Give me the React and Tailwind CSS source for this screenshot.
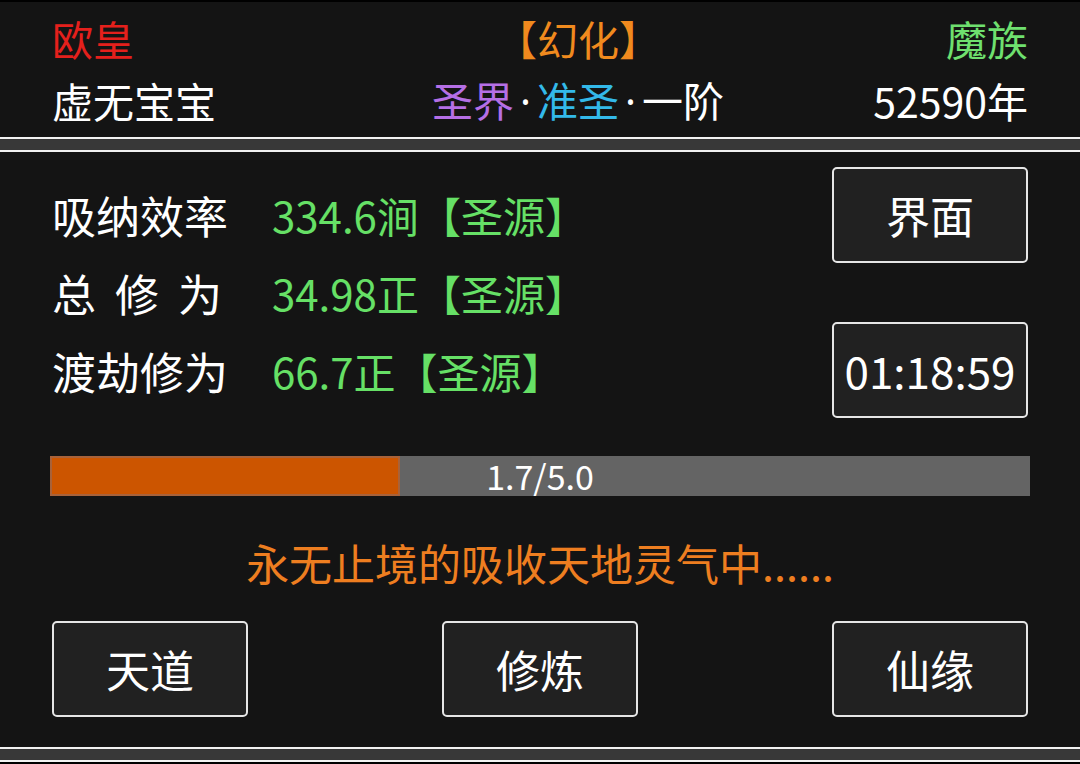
import React from 'react';

const stats = [
  { label: '吸纳效率', value: '334.6涧【圣源】', spread: false },
  { label: '总修为', value: '34.98正【圣源】', spread: true },
  { label: '渡劫修为', value: '66.7正【圣源】', spread: false },
];

function Divider() {
  return (
    <div className="flex flex-col">
      <div className="h-[2px] bg-[#f2f2f2]" />
      <div className="h-[11px] bg-[#383838]" />
      <div className="h-[2px] bg-[#f2f2f2]" />
    </div>
  );
}

function Btn({ children, className = '' }) {
  return (
    <div className={`w-[196px] h-[96px] flex items-center justify-center rounded-[5px] border-2 border-[#e6e6e6] bg-[#212121] text-white text-[44px] ${className}`}>
      {children}
    </div>
  );
}

function Dot() {
  return <span className="font-['Noto_Sans',sans-serif] text-white mx-[6px]">·</span>;
}

export default function App() {
  const current = 1.7;
  const total = 5.0;
  const pct = (current / total) * 105;

  return (
    <div className="w-[1080px] h-[764px] bg-black flex flex-col font-['Noto_Sans_CJK_SC','Noto_Sans',sans-serif] overflow-hidden">
      <div className="mt-[2px] bg-[#141414] h-[135px] px-[52px] pt-[8px]">
        <div className="grid grid-cols-[326px_400px_1fr] h-[56px] items-center text-[41px] leading-none">
          <span className="text-[#e5201c]">欧皇</span>
          <span className="text-center text-[#f08a1e]">【幻化】</span>
          <span className="text-right text-[#6fe06f]">魔族</span>
        </div>
        <div className="grid grid-cols-[326px_400px_1fr] h-[56px] mt-[6px] items-center text-[41px] leading-none text-white">
          <span>虚无宝宝</span>
          <span className="text-center">
            <span className="text-[#b56fe6]">圣界</span><Dot /><span className="text-[#33b9e9]">准圣</span><Dot />一阶
          </span>
          <span className="text-right">52590年</span>
        </div>
      </div>

      <Divider />

      <div className="bg-[#141414] h-[595px] px-[52px] pt-[15px] flex flex-col">
        <div className="flex justify-between">
          <div className="pt-[9px] flex flex-col">
            {stats.map(s => (
              <div key={s.label} className="h-[78px] flex items-center text-[44px] leading-none">
                {s.spread ? (
                  <span className="w-[176px] flex justify-between text-white pr-[6px]">
                    {s.label.split('').map(c => <span key={c}>{c}</span>)}
                  </span>
                ) : (
                  <span className="w-[176px] text-white">{s.label}</span>
                )}
                <span className="ml-[44px] text-[42px] text-[#66e066]">{s.value}</span>
              </div>
            ))}
          </div>
          <div className="flex flex-col gap-[59px]">
            <Btn>界面</Btn>
            <Btn className="text-[43px]">01:18:59</Btn>
          </div>
        </div>

        <div className="relative mt-[38px] -mx-[2px] h-[40px] bg-[#646464]">
          <div className="h-full bg-[#cc5500] border-2 border-[#a8623a]" style={{ width: `${pct}%`, maxWidth: '100%' }} />
          <div className="absolute inset-0 flex items-center justify-center text-white text-[34px] leading-none">
            {current.toFixed(1)}/{total.toFixed(1)}
          </div>
        </div>

        <div className="mt-[38px] h-[56px] flex items-center justify-center text-[43px] leading-none text-[#ee7e20]">
          永无止境的吸收天地灵气中......
        </div>

        <div className="mt-[31px] flex justify-between">
          <Btn>天道</Btn>
          <Btn>修炼</Btn>
          <Btn>仙缘</Btn>
        </div>
      </div>

      <Divider />
    </div>
  );
}
